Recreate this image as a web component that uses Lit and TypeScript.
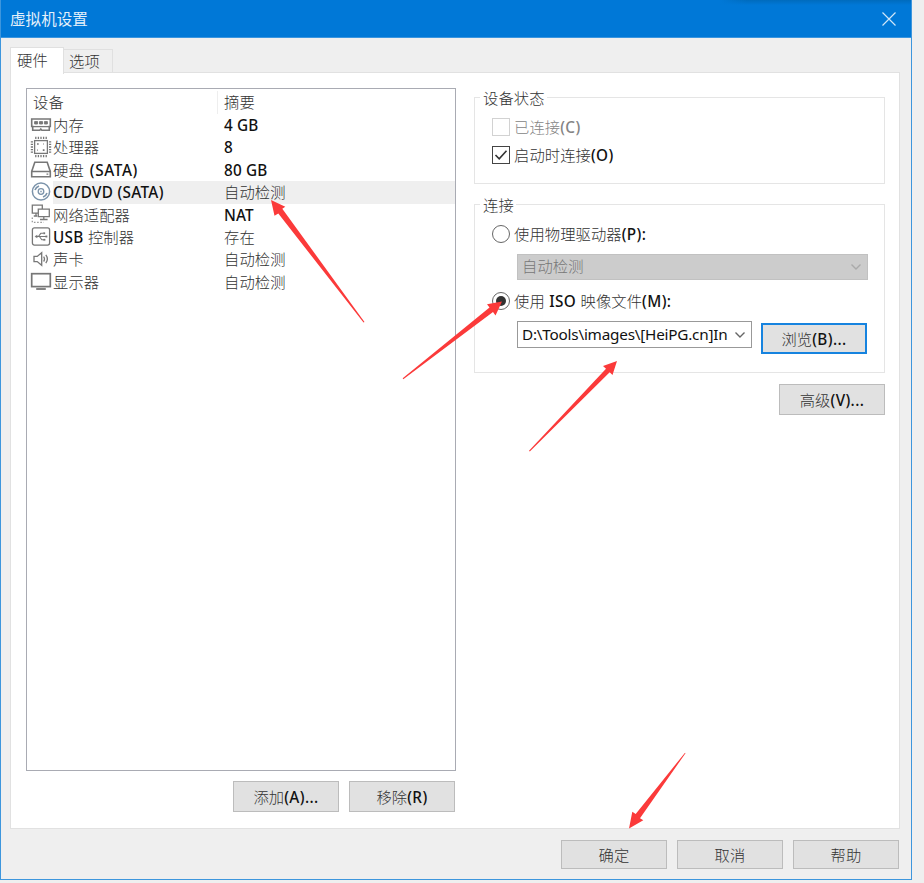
import { LitElement, html, svg, css } from "lit";
import { customElement } from "lit/decorators.js";

const icons: Record<string, unknown> = {
  memory: svg`<path d="M1.7 5h18.6v7.5h-1v3.8h-7.5l-1-1.2-1 1.2H2.7v-3.8h-1z" stroke-width="1.6"/><path d="M2 12.6h18"/><path d="M4.6 7.6h3v2.4h-3zM9.5 7.6h3v2.4h-3zM14.4 7.6h3v2.4h-3z" fill="#777" stroke-width=".9"/>`,
  cpu: svg`<rect x="4.6" y="4.6" width="12.8" height="12.8"/><path d="M5.8 3V.8M8.4 3V.8M11 3V.8M13.6 3V.8M16.2 3V.8M5.8 21.2V19M8.4 21.2V19M11 21.2V19M13.6 21.2V19M16.2 21.2V19M3 5.8H.8M3 8.4H.8M3 11H.8M3 13.6H.8M3 16.2H.8M21.2 5.8H19M21.2 8.4H19M21.2 11H19M21.2 13.6H19M21.2 16.2H19"/><path d="M7 8h1.7M12.8 14.2h1.7M13.2 8h.6M7.2 14.2h.6" stroke-width="1.7"/>`,
  disk: svg`<path d="M4.8 3.3h12.4l3.1 9.2v5.3H1.7v-5.3z" stroke-width="1.6"/><path d="M1.7 12.5h18.6M16.5 15.2h1.8"/>`,
  disc: svg`<g stroke="#7b93aa"><circle cx="11" cy="10.5" r="8.6" stroke-width="1.5"/><circle cx="11" cy="10.5" r="2.8"/><path d="M10.3 10.5h1.4M5 9.1A6.4 6.4 0 0 1 9 4.9M17 11.9A6.4 6.4 0 0 1 13 16.1" stroke-width="1.6"/></g>`,
  network: svg`<path d="M8.2 9.1H2.3V1.2h10V5M8.3 5.1h11v7.5h-11zM13.8 12.7v2.7M10 15.5h7.6M6 9.3v2.5M3.8 12h3.4" stroke-width="1.3"/><path d="M2.3 13.5v4.8h11.5" stroke-dasharray="1.6 1.6" stroke="#999"/>`,
  usb: svg`<rect x="2.4" y="1.9" width="17.2" height="17.2" rx="2"/><path d="M6.5 10.5h9.5M8.4 10.5l2.4-3.2h2.6M9.4 10.5l2.4 3.3h2.2" stroke-width="1.1"/><path d="M4.8 10.5l2.4-1.5v3zM13.4 6.5h1.6v1.6h-1.6zM13.6 13h1.6v1.6h-1.6zM15.6 9.7h1.6v1.6h-1.6z" fill="#777" stroke-width=".3"/>`,
  sound: svg`<path d="M4 8.4h3.2l4.5-3.7v12.6l-4.5-3.7H4zM13.6 8.7c1.2 1.6 1.2 3.2 0 4.8M15.8 6.9c2 2.6 2 5.6 0 8.2"/>`,
  display: svg`<rect x="1.7" y="2.7" width="18.6" height="12.9" stroke-width="1.7"/><path d="M6.2 18h9.6" stroke-width="1.8"/>`,
};

const devices = [
  ["memory", "内存", "4 GB"],
  ["cpu", "处理器", "8"],
  ["disk", "硬盘 (SATA)", "80 GB"],
  ["disc", "CD/DVD (SATA)", "自动检测"],
  ["network", "网络适配器", "NAT"],
  ["usb", "USB 控制器", "存在"],
  ["sound", "声卡", "自动检测"],
  ["display", "显示器", "自动检测"],
];

/* Latin runs are set darker than the Chinese around them. */
const label = (text: string) =>
  html`<span class="text">${(text.match(/[\x20-\x7e]+|[^\x20-\x7e]+/g) ?? []).map((run) =>
    run.charCodeAt(0) < 127 ? html`<span class="latin">${run}</span>` : html`<span class="han">${run}</span>`
  )}</span>`;

const chevron = html`<svg class="chevron" width="12" height="8" viewBox="0 0 12 8"><path d="M1.5 1.5 6 6l4.5-4.5" /></svg>`;

@customElement("app-root")
export class AppRoot extends LitElement {
  static styles = css`
    :host { display: block; width: 924px; height: 883px; background: #efefef; position: relative; overflow: hidden;
      font: 15.3px/20px "Noto Sans", "Noto Sans CJK SC", sans-serif; color: #333; }
    * { box-sizing: border-box; }
    .text { white-space: pre; }
    .han, .latin { line-height: 1; }
    .han { font-family: "Noto Sans CJK SC", sans-serif; font-weight: 300; vertical-align: .5px; letter-spacing: .08px; }
    .latin { color: #111; font-size: 15.3px; font-weight: 500; letter-spacing: .4px; }
    svg { display: block; fill: none; }
    .window { width: 912px; height: 880px; display: flex; flex-direction: column;
      border: 1px solid #3d96dd; border-top: 0; background: #efefef; }
    .titlebar { height: 38px; flex: none; background: linear-gradient(90deg, #0078d7 79%, transparent 82%), linear-gradient(#006bbd, #0078d7 5px); border-bottom: 1px solid #3a95df;
      display: flex; align-items: center; justify-content: space-between; padding: 0 14px 0 9px; }
    .titlebar .han { font-size: 15.5px; font-weight: 400; color: #e4f0fa; }
    .close { stroke: #cfe6f8; stroke-width: 1.2; }
    .tabs { display: flex; align-items: flex-end; padding-left: 9px; height: 35px; flex: none; }
    .tab { height: 24px; width: 49px; border: 1px solid #e0e0e0; border-left: 0; border-bottom: 0; padding: 1px 0 0 5px; }
    .tab.active { height: 27px; width: 54px; border-left: 1px solid #e0e0e0; background: #fff; margin-bottom: -1px; padding: 2px 0 0 6px; z-index: 1; }
    .panel { margin: -1px 0 0 9px; width: 890px; height: 757px; border: 1px solid #e1e1e1; background: #fff;
      display: flex; padding: 15px 13px 0 15px; }
    .left { width: 430px; margin-right: 18px; flex: none; }
    .list { height: 683px; border: 1px solid #a9abb3; padding-top: 2px; }
    .head, .row { display: grid; grid-template-columns: 191px 1fr; }
    .head { height: 23px; line-height: 22px; }
    .head > :first-child { padding-left: 6px; border-right: 1px solid #eee; }
    .head > :last-child { padding-left: 6px; }
    .row { height: 22.4px; line-height: 22.4px; }
    .name { display: flex; padding-left: 3px; }
    .name .latin { letter-spacing: .3px; }
    .name .han + .latin { letter-spacing: .6px; word-spacing: 1.5px; }
    .name svg { width: 22px; height: 22px; stroke: #777; stroke-width: 1.3; flex: none; margin-right: 1px; }
    .value { padding-left: 6px; }
    .value .latin { letter-spacing: .15px; }
    .row.sel { background: linear-gradient(90deg, #fff 26px, #efefef 26px); }
    .buttons { display: flex; gap: 10px; justify-content: flex-end; }
    .left .buttons { margin: 10px 1px 0 0; }
    button { all: unset; box-sizing: border-box; width: 106px; height: 31px; border: 1px solid #bcbcbc; background: #e1e1e1;
      text-align: center; line-height: 30px; }
    .right { width: 411px; flex: none; padding-top: 9px; }
    .group { border: 1px solid #e5e5e5; padding-left: 16.5px; }
    .legend { display: block; width: max-content; background: #fff; margin: -10px 0 0 -11.5px; padding: 0 2px 0 3px; height: 20px; line-height: 20px; }
    .state { height: 87px; }
    .source { height: 169px; margin-top: 20px; }
    .option { display: flex; align-items: center; height: 22px; gap: 4.5px; }
    .option .text { padding-bottom: 1px; }
    .combo .text { padding-bottom: 2px; }
    .state .option { margin-top: 8px; }
    .state .option + .option { margin-top: 6px; }
    .off, .off .latin { color: #848484; }
    .box { width: 18px; height: 18px; border: 1px solid #444; }
    .off .box { border-color: #d2d2d2; }
    .box svg { stroke: #333; stroke-width: 1.6; }
    .radio { width: 18px; height: 18px; border: 1.3px solid #666; border-radius: 50%; display: grid; place-items: center; }
    .dot { width: 10px; height: 10px; border-radius: 50%; background: #333; }
    .combo { margin-left: 25.5px; display: flex; align-items: center; height: 27px; border: 1px solid #999; padding: 0 5px 0 4px;
      justify-content: space-between; width: 235px; }
    .pick .combo .latin { font-weight: 400; letter-spacing: -.22px; }
    .combo.off { width: 351px; height: 26px; background: #ccc; border-color: #c1c1c1; color: #777; }
    .chevron { stroke: #666; stroke-width: 1.4; flex: none; }
    .off .chevron { stroke: #aaa; }
    .source .option { margin-top: 8px; }
    .source .combo.off { margin-top: 9px; }
    .source .combo.off + .option { margin-top: 10px; }
    .pick { display: flex; gap: 9px; margin-top: 9px; }
    .browse { border: 2px solid #1683df; line-height: 28px; margin-top: 2px; }
    .more { margin: 11px 0 0 0; }
    .footer { margin: 11px 12px 0 0; }
    .footer button { height: 29px; line-height: 26px; }
    .arrows { position: absolute; inset: 0; fill: #fb3a3a; z-index: 2; }
  `;

  render() {
    return html`
      <div class="window">
        <div class="titlebar">${label("虚拟机设置")}
          <svg class="close" width="16" height="16" viewBox="0 0 16 16"><path d="M1.5 1.5l13 13M14.5 1.5l-13 13" /></svg>
        </div>
        <div class="tabs">
          <div class="tab active">${label("硬件")}</div>
          <div class="tab">${label("选项")}</div>
        </div>
        <div class="panel">
          <div class="left">
            <div class="list">
              <div class="head"><div>${label("设备")}</div><div>${label("摘要")}</div></div>
              ${devices.map(([icon, name, value]) => html`
                <div class="row ${icon === "disc" ? "sel" : ""}">
                  <div class="name"><svg viewBox="0 0 22 22">${icons[icon]}</svg>${label(name)}</div>
                  <div class="value">${label(value)}</div>
                </div>`)}
            </div>
            <div class="buttons"><button>${label("添加(A)...")}</button><button>${label("移除(R)")}</button></div>
          </div>
          <div class="right">
            <div class="group state">
              <span class="legend">${label("设备状态")}</span>
              <div class="option off"><span class="box"></span>${label("已连接(C)")}</div>
              <div class="option"><span class="box"><svg width="16" height="16" viewBox="0 0 16 16"><path d="M2.5 8l3.7 3.8 7.3-8" /></svg></span>${label("启动时连接(O)")}</div>
            </div>
            <div class="group source">
              <span class="legend">${label("连接")}</span>
              <div class="option"><span class="radio"></span>${label("使用物理驱动器(P):")}</div>
              <div class="combo off">${label("自动检测")}${chevron}</div>
              <div class="option"><span class="radio"><span class="dot"></span></span>${label("使用 ISO 映像文件(M):")}</div>
              <div class="pick">
                <div class="combo">${label("D:\\Tools\\images\\[HeiPG.cn]In")}${chevron}</div>
                <button class="browse">${label("浏览(B)...")}</button>
              </div>
            </div>
            <div class="buttons more"><button>${label("高级(V)...")}</button></div>
          </div>
        </div>
        <div class="buttons footer"><button>${label("确定")}</button><button>${label("取消")}</button><button>${label("帮助")}</button></div>
      </div>
      <svg class="arrows" width="924" height="883" viewBox="0 0 924 883">
        <path d="M271 200L285.3 206.7 282.3 208.7 364.5 322 363.5 322.5 278.3 213.5 274.5 215.7z" />
        <path d="M502 301.5L495.5 315.5 493 312 403.3 379.3 402.7 378.3 489.5 307.5 487 304.3z" />
        <path d="M617 361L612.5 375 609.7 372.3 529.8 451.5 529 450.7 606 368.7 603 366z" />
        <path d="M629 828.5L632.3 811.7 635.7 814 685 752.7 685.5 753.2 640 818.3 643.3 820.3z" />
      </svg>
    `;
  }
}
